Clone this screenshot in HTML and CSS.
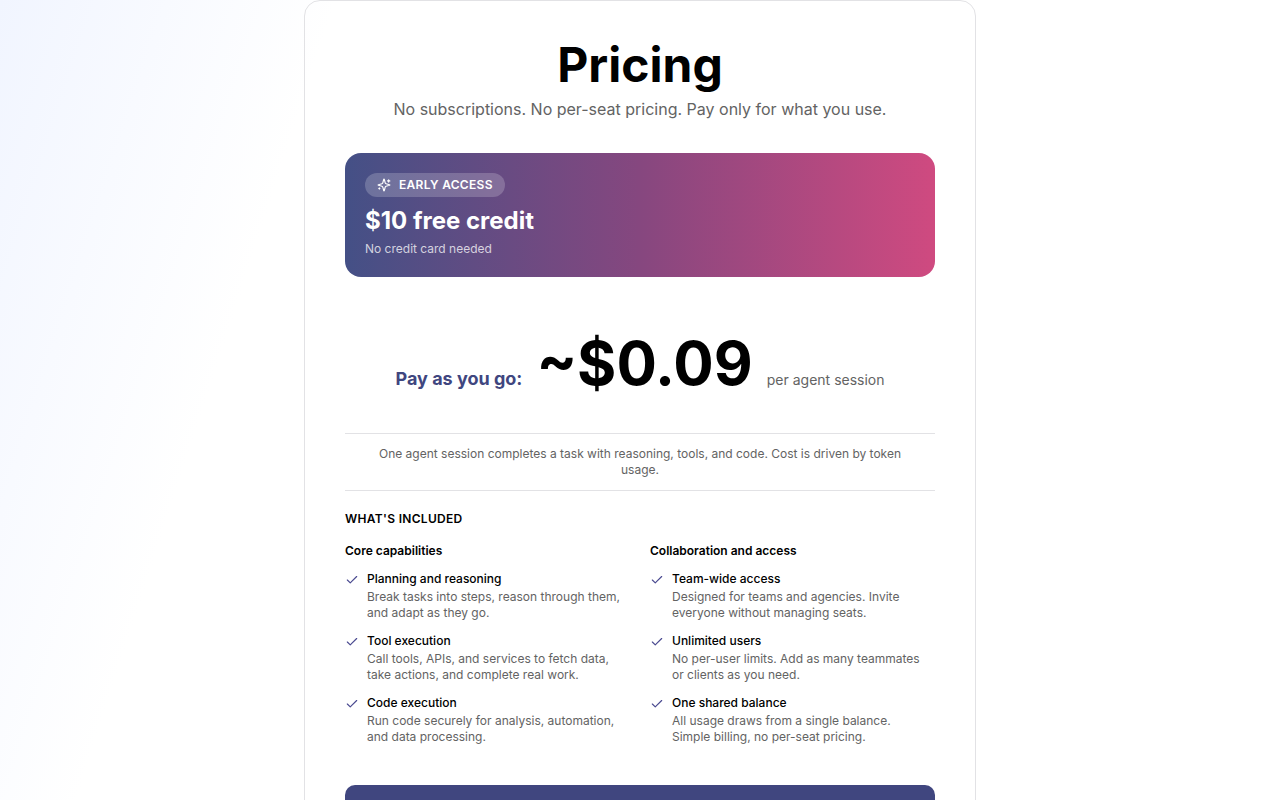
FILE: index.html
```html
<!DOCTYPE html>
<html lang="en">
<head>
<meta charset="utf-8">
<meta name="viewport" content="width=device-width, initial-scale=1">
<title>Pricing</title>
<link rel="stylesheet" href="styles.css">
</head>
<body>
<svg class="symbols" aria-hidden="true">
  <symbol id="check" viewBox="0 0 24 24"><path d="M20 6 9 17l-5-5"/></symbol>
</svg>
<main class="card">
  <header class="intro">
    <h1 class="title">Pricing</h1>
    <p class="subtitle">No subscriptions. No per-seat pricing. Pay only for what you use.</p>
  </header>

  <section class="banner">
    <span class="badge">
      <svg class="icon" viewBox="0 0 24 24" aria-hidden="true"><path d="M9.94 15.5A2 2 0 0 0 8.5 14.06l-6.14-1.58a.5.5 0 0 1 0-.96L8.5 9.94A2 2 0 0 0 9.94 8.5l1.58-6.14a.5.5 0 0 1 .96 0l1.58 6.14a2 2 0 0 0 1.44 1.44l6.14 1.58a.5.5 0 0 1 0 .96l-6.14 1.58a2 2 0 0 0-1.44 1.44l-1.58 6.14a.5.5 0 0 1-.96 0z"/><path d="M20 3v4M22 5h-4M4 17v2M5 18H3"/></svg>
      EARLY ACCESS
    </span>
    <h2 class="offer">$10 free credit</h2>
    <p class="offer-note">No credit card needed</p>
  </section>

  <section class="price">
    <span class="price-label">Pay as you go:</span>
    <span class="price-value">~$0.09</span>
    <span class="price-unit">per agent session</span>
  </section>

  <p class="explain">One agent session completes a task with reasoning, tools, and code. Cost is driven by token usage.</p>

  <h2 class="included">WHAT'S INCLUDED</h2>
  <div class="columns">
    <section class="column">
      <h3 class="column-title">Core capabilities</h3>
      <ul class="features">
        <li class="feature"><svg class="icon tick" aria-hidden="true"><use href="#check"/></svg><div class="feature-body"><h4 class="feature-name">Planning and reasoning</h4><p class="feature-text">Break tasks into steps, reason through them, and adapt as they go.</p></div></li>
        <li class="feature"><svg class="icon tick" aria-hidden="true"><use href="#check"/></svg><div class="feature-body"><h4 class="feature-name">Tool execution</h4><p class="feature-text">Call tools, APIs, and services to fetch data, take actions, and complete real work.</p></div></li>
        <li class="feature"><svg class="icon tick" aria-hidden="true"><use href="#check"/></svg><div class="feature-body"><h4 class="feature-name">Code execution</h4><p class="feature-text">Run code securely for analysis, automation, and data processing.</p></div></li>
      </ul>
    </section>
    <section class="column">
      <h3 class="column-title">Collaboration and access</h3>
      <ul class="features">
        <li class="feature"><svg class="icon tick" aria-hidden="true"><use href="#check"/></svg><div class="feature-body"><h4 class="feature-name">Team-wide access</h4><p class="feature-text">Designed for teams and agencies. Invite everyone without managing seats.</p></div></li>
        <li class="feature"><svg class="icon tick" aria-hidden="true"><use href="#check"/></svg><div class="feature-body"><h4 class="feature-name">Unlimited users</h4><p class="feature-text">No per-user limits. Add as many teammates or clients as you need.</p></div></li>
        <li class="feature"><svg class="icon tick" aria-hidden="true"><use href="#check"/></svg><div class="feature-body"><h4 class="feature-name">One shared balance</h4><p class="feature-text">All usage draws from a single balance. Simple billing, no per-seat pricing.</p></div></li>
      </ul>
    </section>
  </div>

  <button class="cta" type="button"></button>
</main>
</body>
</html>
```

FILE: styles.css
```css
* { box-sizing: border-box; }

body {
  margin: 0;
  min-height: 100vh;
  font-family: Inter, "Liberation Sans", sans-serif;
  font-size: 12px;
  line-height: 16px;
  color: #000;
  background: #fff linear-gradient(108deg, #f1f5ff 0, #fff 320px) fixed;
}

h1, h2, h3, h4, p, ul { margin: 0; padding: 0; }
ul { list-style: none; }

.symbols { display: none; }

.icon {
  width: 14px;
  height: 14px;
  flex: none;
  fill: none;
  stroke: currentColor;
  stroke-width: 2;
  stroke-linecap: round;
  stroke-linejoin: round;
}

.card {
  max-width: 672px;
  margin: 0 auto;
  padding: 40px;
  border: 1px solid #e2e2e5;
  border-radius: 16px;
}

.intro { text-align: center; }
.title { font-size: 48px; line-height: 48px; font-weight: 700; }
.subtitle { margin-top: 8px; font-size: 16px; line-height: 24px; color: #636363; }

.banner {
  margin-top: 32px;
  padding: 20px;
  border-radius: 16px;
  color: #fff;
  background: linear-gradient(90deg, #445086, #86477f 50%, #cf4a80);
}
.badge {
  display: flex;
  width: fit-content;
  align-items: center;
  gap: 8px;
  padding: 4px 12px;
  border-radius: 12px;
  font-weight: 600;
  letter-spacing: 0.3px;
  background: rgba(255, 255, 255, 0.2);
}
.offer { margin-top: 8px; font-size: 24px; line-height: 32px; font-weight: 700; }
.offer-note { margin-top: 4px; color: rgba(255, 255, 255, 0.75); }

.price {
  display: flex;
  flex-wrap: wrap;
  justify-content: center;
  align-items: baseline;
  column-gap: 14px;
  margin: 56px 0 40px;
}
.price-label { font-size: 18px; line-height: 28px; font-weight: 700; color: #40467f; }
.price-value { font-size: 60px; line-height: 60px; font-weight: 700; }
.price-unit { font-size: 14px; line-height: 20px; color: #636363; }

.explain {
  padding: 12px 16px;
  border: solid #e2e2e5;
  border-width: 1px 0;
  text-align: center;
  color: #636363;
}

.included { margin: 20px 0 16px; font-size: 12px; font-weight: 600; letter-spacing: 0.3px; }
.columns { display: grid; grid-template-columns: 1fr 1fr; gap: 20px; }
.column-title { font-size: 12px; font-weight: 600; }
.features { display: grid; gap: 12px; margin-top: 12px; }
.feature { display: flex; gap: 8px; padding-right: 8px; }
.tick { margin-top: 2px; color: #4a4a90; }
.feature-name { font-size: 12px; font-weight: 500; }
.feature-text { margin-top: 2px; color: #636363; }

.cta {
  display: block;
  width: 100%;
  height: 48px;
  margin-top: 40px;
  border: 0;
  border-radius: 10px;
  background: #40467f;
}

@media (max-width: 560px) {
  .card { padding: 24px; }
  .columns { grid-template-columns: 1fr; }
}
```
